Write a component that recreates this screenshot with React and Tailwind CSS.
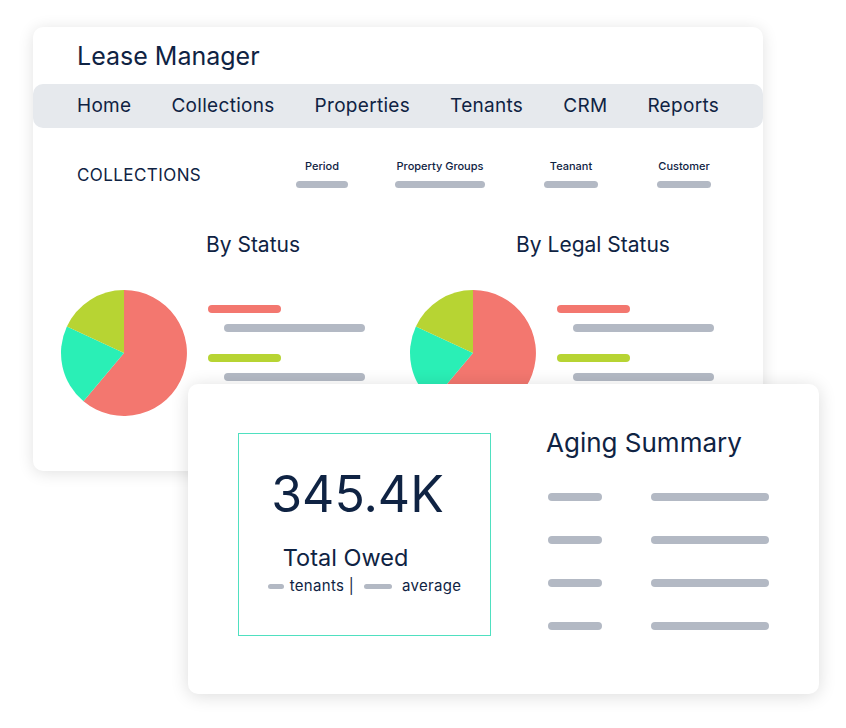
import React from "react";

function Pie() {
  return (
    <svg width="128" height="128" viewBox="-1 -1 128 128">
      <path d="M63 63 L63 0 A63 63 0 1 1 22.5 111.3 Z" fill="#f3776f" />
      <path d="M63 63 L22.5 111.3 A63 63 0 0 1 5.9 36.4 Z" fill="#2aefb6" />
      <path d="M63 63 L5.9 36.4 A63 63 0 0 1 63 0 Z" fill="#b7d433" />
    </svg>
  );
}

function Legend() {
  return (
    <div className="flex flex-col pt-[16px]">
      <div className="h-[8px] w-[73px] rounded-full bg-[#f3776f]" />
      <div className="h-[8px] w-[141px] rounded-full bg-[#b3b9c4] ml-[16px] mt-[11px]" />
      <div className="h-[8px] w-[73px] rounded-full bg-[#b7d433] mt-[22px]" />
      <div className="h-[8px] w-[141px] rounded-full bg-[#b3b9c4] ml-[16px] mt-[11px]" />
    </div>
  );
}

function Filter({ label, w, ml }) {
  return (
    <div className="w-[100px] flex flex-col items-center gap-[9px]" style={{ marginLeft: ml }}>
      <span className="text-[11px] font-medium leading-none whitespace-nowrap">{label}</span>
      <div className="h-[7px] rounded-full bg-[#b3b9c4]" style={{ width: w }} />
    </div>
  );
}

export default function App() {
  const nav = ["Home", "Collections", "Properties", "Tenants", "CRM", "Reports"];
  return (
    <div className="relative w-[846px] h-[728px] bg-white text-[#0f2343]" style={{ fontFamily: "Inter, 'Noto Sans', sans-serif" }}>
      <div className="absolute left-[33px] top-[27px] w-[730px] h-[444px] bg-white rounded-[10px] shadow-[0_2px_16px_rgba(0,0,0,0.12)] overflow-hidden">
        <div className="h-[57px] pl-[44px] flex items-center text-[25px] pt-[3px]">Lease Manager</div>
        <div className="h-[44px] bg-[#e6e9ed] rounded-[10px] flex items-center pl-[44px] gap-[40px] text-[19px] tracking-[0.3px]">
          {nav.map((n) => (
            <span key={n}>{n}</span>
          ))}
        </div>
        <div className="flex items-start pl-[44px] pt-[33px] h-[90px]">
          <span className="text-[17px] tracking-wide pt-[2px] w-[195px]">COLLECTIONS</span>
          <Filter label="Period" w={52} ml={0} />
          <Filter label="Property Groups" w={90} ml={18} />
          <Filter label="Teanant" w={54} ml={31} />
          <Filter label="Customer" w={54} ml={13} />
        </div>
        <div className="flex pt-[11px]">
          <div className="w-[350px] flex flex-col">
            <div className="text-[21px] text-center pl-[90px]">By Status</div>
            <div className="flex gap-[20px] pl-[27px] pt-[28px]">
              <Pie />
              <Legend />
            </div>
          </div>
          <div className="w-[350px] flex flex-col">
            <div className="text-[21px] text-center pl-[70px]">By Legal Status</div>
            <div className="flex gap-[20px] pl-[26px] pt-[28px]">
              <Pie />
              <Legend />
            </div>
          </div>
        </div>
      </div>

      <div className="absolute left-[188px] top-[384px] w-[631px] h-[310px] bg-white rounded-[10px] shadow-[0_2px_18px_rgba(0,0,0,0.14)] flex pl-[50px] pt-[49px]">
        <div className="w-[253px] h-[203px] border border-[#4fe0c0] flex flex-col items-center">
          <div className="text-[50px] leading-none mt-[35px] -ml-[14px]">345.4K</div>
          <div className="text-[23.5px] mt-[21px] -ml-[38px]">Total Owed</div>
          <div className="flex items-center gap-[6px] text-[15px] mt-[0px] ml-[0px]">
            <div className="h-[5px] w-[16px] rounded-full bg-[#b3b9c4]" />
            <span className="tracking-[0.3px]">tenants |</span>
            <div className="h-[5px] w-[28px] rounded-full bg-[#b3b9c4] ml-[4px]" />
            <span className="ml-[4px] tracking-[0.3px]">average</span>
          </div>
        </div>
        <div className="ml-[55px] flex flex-col">
          <div className="text-[26px] leading-none mt-[-3px]">Aging Summary</div>
          <div className="flex flex-col gap-[35px] mt-[37px] ml-[2px]">
            {[0, 1, 2, 3].map((i) => (
              <div key={i} className="flex gap-[49px]">
                <div className="h-[8px] w-[54px] rounded-full bg-[#b3b9c4]" />
                <div className="h-[8px] w-[118px] rounded-full bg-[#b3b9c4]" />
              </div>
            ))}
          </div>
        </div>
      </div>
    </div>
  );
}
